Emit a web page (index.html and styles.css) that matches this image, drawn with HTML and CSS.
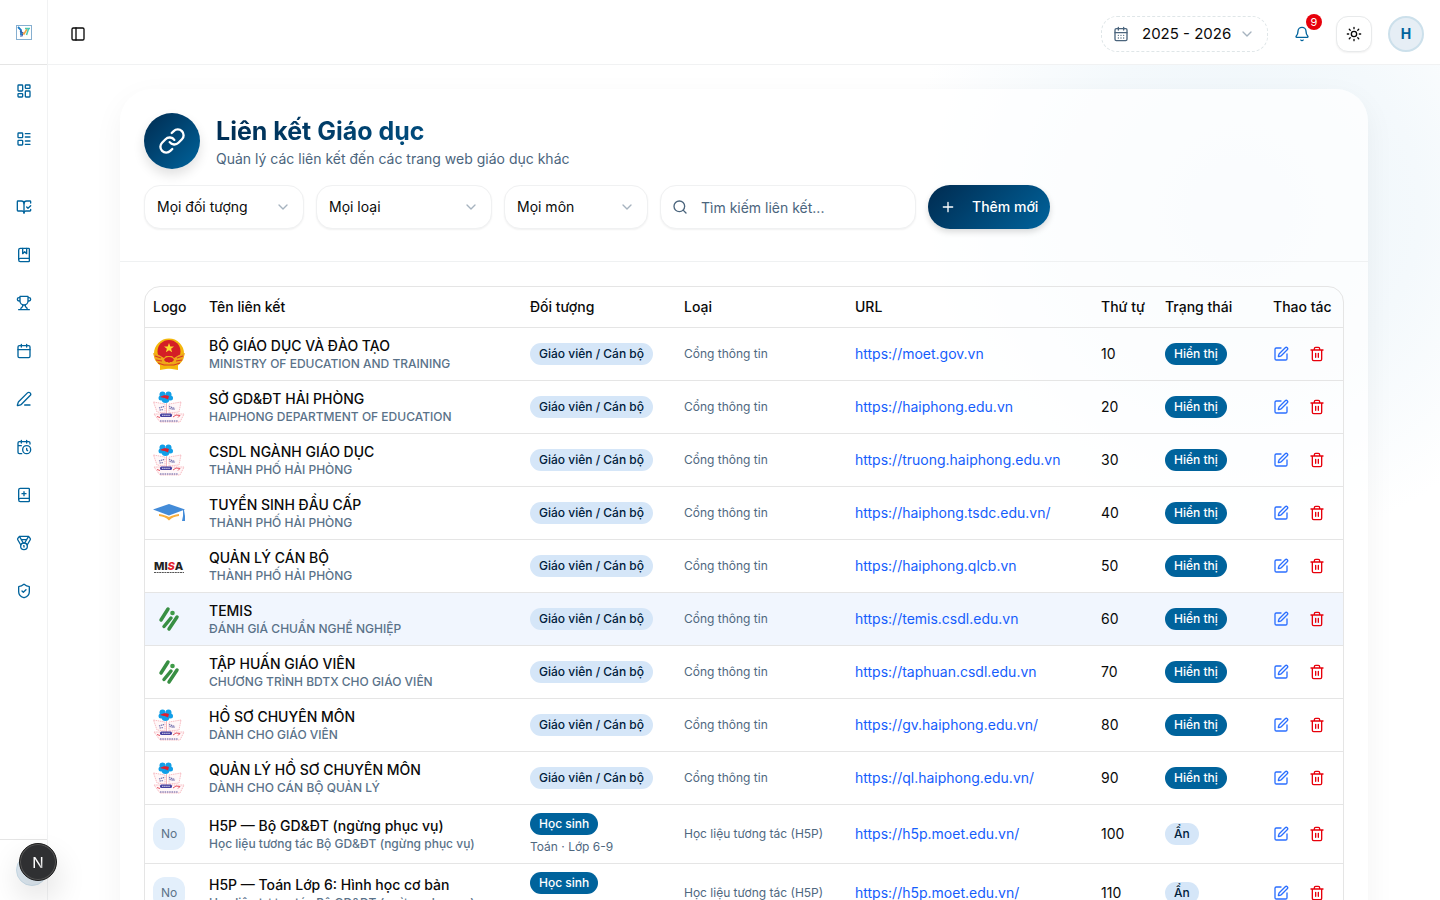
FILE: index.html
```html
<!DOCTYPE html>
<html lang="vi">
<head>
    <meta charset="UTF-8" />
    <meta name="viewport" content="width=device-width, initial-scale=1.0" />
    <title>Liên kết Giáo dục</title>
    <link rel="stylesheet" href="styles.css">
</head>
<body>
    <!-- Icons -->
    <svg class="sprite" aria-hidden="true">
        <symbol id="i-panel" viewBox="0 0 24 24"><rect x="3" y="3" width="18" height="18" rx="2"/><path d="M9 3v18"/></symbol>
        <symbol id="i-dashboard" viewBox="0 0 24 24"><rect x="3" y="3" width="7" height="9" rx="1"/><rect x="14" y="3" width="7" height="5" rx="1"/><rect x="14" y="12" width="7" height="9" rx="1"/><rect x="3" y="16" width="7" height="5" rx="1"/></symbol>
        <symbol id="i-list" viewBox="0 0 24 24"><rect x="3" y="3" width="7" height="7" rx="1"/><rect x="3" y="14" width="7" height="7" rx="1"/><path d="M14 4h7M14 9h7M14 15h7M14 20h7"/></symbol>
        <symbol id="i-book-check" viewBox="0 0 24 24"><path d="M12 21V7M16 12l2 2 4-4"/><path d="M22 6V4a1 1 0 0 0-1-1h-5a4 4 0 0 0-4 4 4 4 0 0 0-4-4H3a1 1 0 0 0-1 1v13a1 1 0 0 0 1 1h6a3 3 0 0 1 3 3 3 3 0 0 1 3-3h6a1 1 0 0 0 1-1v-1.3"/></symbol>
        <symbol id="i-book-mark" viewBox="0 0 24 24"><path d="M10 2v8l3-3 3 3V2"/><path d="M4 19.5v-15A2.5 2.5 0 0 1 6.5 2H19a1 1 0 0 1 1 1v18a1 1 0 0 1-1 1H6.5a1 1 0 0 1 0-5H20"/></symbol>
        <symbol id="i-trophy" viewBox="0 0 24 24"><path d="M6 9H4.500a2.500 2.500 0 0 1 0-5H6M18 9h1.500a2.500 2.500 0 0 0 0-5H18M4 22h16M10 14.660V17c0 .550-.470.980-.970 1.210C7.850 18.750 7 20.240 7 22M14 14.660V17c0 .550.470.980.970 1.210C16.150 18.750 17 20.240 17 22M18 2H6v7a6 6 0 0 0 12 0V2Z"/></symbol>
        <symbol id="i-calendar" viewBox="0 0 24 24"><path d="M8 2v4M16 2v4M3 10h18"/><rect x="3" y="4" width="18" height="18" rx="2"/></symbol>
        <symbol id="i-calendar-days" viewBox="0 0 24 24"><path d="M8 2v4M16 2v4M3 10h18M8 14h.01M12 14h.01M16 14h.01M8 18h.01M12 18h.01M16 18h.01"/><rect x="3" y="4" width="18" height="18" rx="2"/></symbol>
        <symbol id="i-pen" viewBox="0 0 24 24"><path d="M13 21h8"/><path d="M21.174 6.812a1 1 0 0 0-3.986-3.987L3.842 16.174a2 2 0 0 0-.5.830l-1.321 4.352a.5.5 0 0 0 .623.622l4.353-1.320a2 2 0 0 0 .830-.497z"/></symbol>
        <symbol id="i-calendar-clock" viewBox="0 0 24 24"><path d="M21 7.500V6a2 2 0 0 0-2-2H5a2 2 0 0 0-2 2v14a2 2 0 0 0 2 2h3.500M16 2v4M8 2v4M3 10h5M17.500 17.500 16 16.300V14"/><circle cx="16" cy="16" r="6"/></symbol>
        <symbol id="i-book-plus" viewBox="0 0 24 24"><path d="M12 7v6M9 10h6"/><path d="M4 19.5v-15A2.5 2.5 0 0 1 6.5 2H19a1 1 0 0 1 1 1v18a1 1 0 0 1-1 1H6.5a1 1 0 0 1 0-5H20"/></symbol>
        <symbol id="i-medal" viewBox="0 0 24 24"><path d="M7.210 15 2.660 7.140a2 2 0 0 1 .130-2.200L4.400 2.800A2 2 0 0 1 6 2h12a2 2 0 0 1 1.600.800l1.600 2.140a2 2 0 0 1 .140 2.200L16.790 15M11 12 5.120 2.200M13 12l5.880-9.800M8 7h8"/><circle cx="12" cy="17" r="5"/><path d="M12 18v-2h-.5"/></symbol>
        <symbol id="i-shield" viewBox="0 0 24 24"><path d="M20 13c0 5-3.500 7.500-7.660 8.950a1 1 0 0 1-.670-.010C7.500 20.500 4 18 4 13V6a1 1 0 0 1 1-1c2 0 4.500-1.200 6.240-2.720a1.170 1.170 0 0 1 1.520 0C14.510 3.810 17 5 19 5a1 1 0 0 1 1 1z"/><path d="m9 12 2 2 4-4"/></symbol>
        <symbol id="i-chevron" viewBox="0 0 24 24"><path d="m6 9 6 6 6-6"/></symbol>
        <symbol id="i-bell" viewBox="0 0 24 24"><path d="M10.268 21a2 2 0 0 0 3.464 0M3.262 15.326A1 1 0 0 0 4 17h16a1 1 0 0 0 .740-1.673C19.410 13.956 18 12.499 18 8A6 6 0 0 0 6 8c0 4.499-1.411 5.956-2.738 7.326"/></symbol>
        <symbol id="i-sun" viewBox="0 0 24 24"><circle cx="12" cy="12" r="4"/><path d="M12 2v2M12 20v2M4.930 4.930l1.410 1.410M17.660 17.660l1.410 1.410M2 12h2M20 12h2M6.340 17.660l-1.410 1.410M19.070 4.930l-1.410 1.410"/></symbol>
        <symbol id="i-link" viewBox="0 0 24 24"><path d="M10 13a5 5 0 0 0 7.540.540l3-3a5 5 0 0 0-7.070-7.070l-1.720 1.710"/><path d="M14 11a5 5 0 0 0-7.540-.540l-3 3a5 5 0 0 0 7.070 7.070l1.710-1.710"/></symbol>
        <symbol id="i-search" viewBox="0 0 24 24"><circle cx="11" cy="11" r="8"/><path d="m21 21-4.300-4.300"/></symbol>
        <symbol id="i-plus" viewBox="0 0 24 24"><path d="M5 12h14M12 5v14"/></symbol>
        <symbol id="i-edit" viewBox="0 0 24 24"><path d="M12 3H5a2 2 0 0 0-2 2v14a2 2 0 0 0 2 2h14a2 2 0 0 0 2-2v-7"/><path d="M18.375 2.625a1 1 0 0 1 3 3l-9.013 9.014a2 2 0 0 1-.853.505l-2.873.840a.5.5 0 0 1-.620-.620l.840-2.873a2 2 0 0 1 .506-.852z"/></symbol>
        <symbol id="i-trash" viewBox="0 0 24 24"><path d="M3 6h18M19 6v14a2 2 0 0 1-2 2H7a2 2 0 0 1-2-2V6M8 6V4a2 2 0 0 1 2-2h4a2 2 0 0 1 2 2v2M10 11v6M14 11v6"/></symbol>

        <!-- Partner logos -->
        <symbol id="l-moet" viewBox="0 0 32 32">
            <path d="M7 26h18v6l-9-1.500L7 32z" fill="#f5b90f"/>
            <circle cx="16" cy="15.500" r="15" fill="#f3b70d"/>
            <circle cx="16" cy="13.500" r="11.500" fill="#d41f26"/>
            <path d="M16 5l1.300 3.400 3.700.1-2.900 2.300 1 3.500-3.100-2-3.100 2 1-3.500L11 8.500l3.700-.1z" fill="#fbdc2d"/>
            <path d="M0 15l6 2 5 3 2-2h6l2 2 5-3 6-2-2 7-4 4-7 1-3-3-3 3-7-1-4-4z" fill="#eea71a"/>
            <path d="M11 22c1-4 9-4 10 0l-2 2h-6z" fill="#d41f26"/>
            <path d="M2 18l6 2M30 18l-6 2M3 22l6 1M29 22l-6 1M5 25l6 2h10l6-2" fill="none" stroke="#d83b24" stroke-width="1.200"/>
        </symbol>
        <symbol id="l-haiphong" viewBox="0 0 32 32">
            <g fill="#129fe8"><circle cx="9.500" cy="3.500" r="3"/><circle cx="15.500" cy="3.500" r="3"/><circle cx="8" cy="7" r="2.500"/><circle cx="17.500" cy="7" r="2.500"/><circle cx="12.500" cy="8" r="4"/></g>
            <path d="M7 6c3-2 6-2.500 9-1l-1 3.500c-2-1-3-1.500-4-1.500z" fill="#e11f2e"/>
            <g fill="#fff7f8" stroke="#f3a2ab" stroke-width=".7" stroke-dasharray="1.500 .7">
                <path d="M.5 11l11.500 2v9L4 21zM28 11l-12 2v9l10-1zM1 23h30l-4 8H7z"/>
            </g>
            <path d="M13.500 12v11" stroke="#f0a3a9" stroke-width=".8"/>
            <path d="M6 17l5-1.500M16 15.500l6 2M6.500 19l4-.5M16.500 17.500l5 1" stroke="#7370ad" stroke-width="1.200" stroke-dasharray="1.400 .6"/>
            <rect x="7" y="22.500" width="12" height="3.500" rx="1.500" fill="#4540a0"/>
            <path d="M9 24.300h8" stroke="#fff" stroke-width=".8" stroke-dasharray="1.500 .6"/>
            <path d="M20 26l3-2 4 .5-2 2M4 25.500l3 1" fill="none" stroke="#e55362"/>
            <path d="M7 30h18" stroke="#8f88bb" stroke-width="1.300" stroke-dasharray="1.500 .8"/>
        </symbol>
        <symbol id="l-cap" viewBox="0 0 32 32">
            <path d="M6 17c4 .5 7 1.500 10 3 3-1.500 6-2.500 10-3v2c-4 .5-7 1.500-10 4.500-3-3-6-4-10-4.500z" fill="#f9ae3c"/>
            <path d="M0 12.500L16 7l16 5.500L16 18.500z" fill="#438bd8"/>
            <path d="M30 13v6l-1 5h3v-5l-1-6z" fill="#438bd8"/>
        </symbol>
        <symbol id="l-temis" viewBox="0 0 32 32">
            <path d="M15 6L8 17M18 15l-7 8.500M24 14l-8 12" stroke="#388f43" stroke-width="3.500" stroke-linecap="round"/>
            <circle cx="19.500" cy="10" r="2.300" fill="#3f9b48"/>
        </symbol>
    </svg>

    <div class="app">
        <!-- Sidebar -->
        <aside class="sidebar">
            <a class="brand" href="#" aria-label="Trang chủ">
                <svg width="16" height="16" viewBox="0 0 16 16" fill="none">
                    <rect x=".5" y="1.500" width="15" height="14" stroke="#86afd0"/>
                    <path d="M2 3l3 3v5" stroke="#1b79c4" stroke-width="1.800"/>
                    <path d="M4 7l3 2-1 3H4" stroke="#3659a7" stroke-width="1.200"/>
                    <path d="M7 9l1 1 3-5" stroke="#f5a443" stroke-width="1.500"/>
                    <path d="M9 4.500h5M12.500 5l-2 6" stroke="#49c7b4" stroke-width="1.500"/>
                </svg>
            </a>
            <nav class="nav">
                <div class="nav-group">
                    <a href="#" aria-label="Tổng quan"><svg class="icon"><use href="#i-dashboard"/></svg></a>
                    <a href="#" aria-label="Danh mục"><svg class="icon"><use href="#i-list"/></svg></a>
                </div>
                <div class="nav-group">
                    <a href="#" aria-label="Học tập"><svg class="icon"><use href="#i-book-check"/></svg></a>
                    <a href="#" aria-label="Sổ"><svg class="icon"><use href="#i-book-mark"/></svg></a>
                    <a href="#" aria-label="Thi đua"><svg class="icon"><use href="#i-trophy"/></svg></a>
                    <a href="#" aria-label="Lịch"><svg class="icon"><use href="#i-calendar"/></svg></a>
                    <a href="#" aria-label="Soạn bài"><svg class="icon"><use href="#i-pen"/></svg></a>
                    <a href="#" aria-label="Lịch hẹn"><svg class="icon"><use href="#i-calendar-clock"/></svg></a>
                    <a href="#" aria-label="Thêm sách"><svg class="icon"><use href="#i-book-plus"/></svg></a>
                    <a href="#" aria-label="Khen thưởng"><svg class="icon"><use href="#i-medal"/></svg></a>
                    <a href="#" aria-label="Phân quyền"><svg class="icon"><use href="#i-shield"/></svg></a>
                </div>
            </nav>
            <div class="sidebar-footer"><span class="user-dot"></span></div>
        </aside>

        <div class="page">
            <!-- Top bar -->
            <header class="topbar">
                <button class="trigger" aria-label="Thu gọn"><svg class="icon"><use href="#i-panel"/></svg></button>
                <div class="topbar-right">
                    <div class="year field">
                        <svg class="icon field-icon"><use href="#i-calendar-days"/></svg>
                        <select aria-label="Năm học"><option>2025 - 2026</option></select>
                        <svg class="icon chevron"><use href="#i-chevron"/></svg>
                    </div>
                    <button class="bell" aria-label="Thông báo"><svg class="icon"><use href="#i-bell"/></svg><span class="count">9</span></button>
                    <button class="theme" aria-label="Giao diện"><svg class="icon"><use href="#i-sun"/></svg></button>
                    <button class="avatar">H</button>
                </div>
            </header>

            <main class="content">
                <section class="card">
                    <div class="card-header">
                        <div class="heading">
                            <div class="heading-icon"><svg class="icon"><use href="#i-link"/></svg></div>
                            <div>
                                <h1>Liên kết Giáo dục</h1>
                                <p>Quản lý các liên kết đến các trang web giáo dục khác</p>
                            </div>
                        </div>
                        <div class="filters">
                            <div class="field filter-target">
                                <select aria-label="Đối tượng"><option>Mọi đối tượng</option></select>
                                <svg class="icon chevron"><use href="#i-chevron"/></svg>
                            </div>
                            <div class="field filter-type">
                                <select aria-label="Loại"><option>Mọi loại</option></select>
                                <svg class="icon chevron"><use href="#i-chevron"/></svg>
                            </div>
                            <div class="field filter-subject">
                                <select aria-label="Môn"><option>Mọi môn</option></select>
                                <svg class="icon chevron"><use href="#i-chevron"/></svg>
                            </div>
                            <div class="field search">
                                <svg class="icon field-icon"><use href="#i-search"/></svg>
                                <input type="text" aria-label="Tìm kiếm" placeholder="Tìm kiếm liên kết..." />
                            </div>
                            <button class="add-btn"><svg class="icon"><use href="#i-plus"/></svg>Thêm mới</button>
                        </div>
                    </div>

                    <div class="card-body">
                        <div class="table-wrap">
                            <table>
                                <thead>
                                    <tr>
                                        <th class="col-logo">Logo</th>
                                        <th>Tên liên kết</th>
                                        <th class="col-target">Đối tượng</th>
                                        <th class="col-type">Loại</th>
                                        <th class="col-url">URL</th>
                                        <th class="col-order">Thứ tự</th>
                                        <th class="col-status">Trạng thái</th>
                                        <th class="col-actions">Thao tác</th>
                                    </tr>
                                </thead>
                                <tbody id="links"></tbody>
                            </table>
                        </div>
                    </div>
                </section>
            </main>
        </div>
    </div>

    <button class="dev-badge" aria-label="Next.js">
        <svg width="38" height="38" viewBox="0 0 38 38">
            <defs>
                <linearGradient id="n-fade" x1="0" y1="0" x2="1" y2="1">
                    <stop offset=".6" stop-color="#fff"/>
                    <stop offset="1" stop-color="#fff" stop-opacity=".4"/>
                </linearGradient>
            </defs>
            <text x="19" y="25" text-anchor="middle" fill="url(#n-fade)">N</text>
        </svg>
    </button>

    <script>
        const links = [
            { logo: "moet", name: "BỘ GIÁO DỤC VÀ ĐÀO TẠO", desc: "MINISTRY OF EDUCATION AND TRAINING", url: "https://moet.gov.vn" },
            { logo: "haiphong", name: "SỞ GD&ĐT HẢI PHÒNG", desc: "HAIPHONG DEPARTMENT OF EDUCATION", url: "https://haiphong.edu.vn" },
            { logo: "haiphong", name: "CSDL NGÀNH GIÁO DỤC", desc: "THÀNH PHỐ HẢI PHÒNG", url: "https://truong.haiphong.edu.vn" },
            { logo: "cap", name: "TUYỂN SINH ĐẦU CẤP", desc: "THÀNH PHỐ HẢI PHÒNG", url: "https://haiphong.tsdc.edu.vn/" },
            { logo: "misa", name: "QUẢN LÝ CÁN BỘ", desc: "THÀNH PHỐ HẢI PHÒNG", url: "https://haiphong.qlcb.vn" },
            { logo: "temis", name: "TEMIS", desc: "ĐÁNH GIÁ CHUẨN NGHỀ NGHIỆP", url: "https://temis.csdl.edu.vn", active: true },
            { logo: "temis", name: "TẬP HUẤN GIÁO VIÊN", desc: "CHƯƠNG TRÌNH BDTX CHO GIÁO VIÊN", url: "https://taphuan.csdl.edu.vn" },
            { logo: "haiphong", name: "HỒ SƠ CHUYÊN MÔN", desc: "DÀNH CHO GIÁO VIÊN", url: "https://gv.haiphong.edu.vn/" },
            { logo: "haiphong", name: "QUẢN LÝ HỒ SƠ CHUYÊN MÔN", desc: "DÀNH CHO CÁN BỘ QUẢN LÝ", url: "https://ql.haiphong.edu.vn/" },
            { name: "H5P — Bộ GD&ĐT (ngừng phục vụ)", desc: "Học liệu tương tác Bộ GD&ĐT (ngừng phục vụ)", url: "https://h5p.moet.edu.vn/", grades: "Toán · Lớp 6-9" },
            { name: "H5P — Toán Lớp 6: Hình học cơ bản", desc: "Học liệu tương tác Bộ GD&ĐT (ngừng phục vụ)", url: "https://h5p.moet.edu.vn/", grades: "Toán · Lớp 6" }
        ];

        const icon = name => `<svg class="icon"><use href="#i-${name}"/></svg>`;
        const esc = text => text.replace(/&/g, "&amp;");

        function logo(name) {
            if (!name) return `<span class="no-logo">No</span>`;
            if (name === "misa") {
                return `<svg class="logo" viewBox="0 0 32 32">
                    <text x="1" y="20" class="misa-word">MI<tspan class="misa-s">S</tspan>A</text>
                    <path d="M1 22.500h30" stroke="#555" stroke-width="1.200" stroke-dasharray="2 .6"/>
                </svg>`;
            }
            return `<svg class="logo"><use href="#l-${name}"/></svg>`;
        }

        document.getElementById("links").innerHTML = links.map((link, i) => `
            <tr class="${link.active ? "active" : ""}">
                <td>${logo(link.logo)}</td>
                <td><div class="name">${esc(link.name)}</div><div class="desc">${esc(link.desc)}</div></td>
                <td>${link.grades
                    ? `<span class="badge solid">Học sinh</span><div class="grades">${link.grades}</div>`
                    : `<span class="badge">Giáo viên / Cán bộ</span>`}</td>
                <td class="type">${link.grades ? "Học liệu tương tác (H5P)" : "Cổng thông tin"}</td>
                <td><a class="url" href="${link.url}">${link.url}</a></td>
                <td>${(i + 1) * 10}</td>
                <td>${link.grades ? `<span class="badge">Ẩn</span>` : `<span class="badge solid">Hiển thị</span>`}</td>
                <td><div class="actions">
                    <button class="edit" aria-label="Sửa">${icon("edit")}</button>
                    <button class="delete" aria-label="Xóa">${icon("trash")}</button>
                </div></td>
            </tr>`).join("");
    </script>
</body>
</html>
```

FILE: styles.css
```css
* {
    box-sizing: border-box;
}

body {
    margin: 0;
    font-family: Inter, "Noto Sans", sans-serif;
    font-size: 14px;
    line-height: 20px;
    color: #0a0a0a;
    background: #fff;
}

button, select, input {
    font: inherit;
    color: inherit;
}

button {
    padding: 0;
    border: none;
    background: none;
    cursor: pointer;
    display: flex;
    align-items: center;
    justify-content: center;
}

.sprite {
    position: absolute;
    width: 0;
    height: 0;
}

.icon {
    display: block;
    flex: none;
    width: 16px;
    height: 16px;
    fill: none;
    stroke: currentColor;
    stroke-width: 2;
    stroke-linecap: round;
    stroke-linejoin: round;
}

.app {
    display: flex;
    height: 100vh;
}

/* Sidebar */
.sidebar {
    flex: none;
    width: 48px;
    display: flex;
    flex-direction: column;
    border-right: 1px solid #f1f2f3;
}

.brand {
    height: 65px;
    display: flex;
    align-items: center;
    justify-content: center;
    border-bottom: 1px solid #e5e5e5;
}

.nav {
    flex: 1;
    display: flex;
    flex-direction: column;
    gap: 36px;
    padding-top: 10px;
}

.nav-group {
    display: flex;
    flex-direction: column;
    align-items: center;
    gap: 16px;
}

.nav a {
    width: 32px;
    height: 32px;
    display: flex;
    align-items: center;
    justify-content: center;
    color: #00639c;
}

.sidebar-footer {
    height: 61px;
    padding: 14px 0 0 16px;
    border-top: 1px solid #e5e5e5;
}

.user-dot {
    display: block;
    width: 32px;
    height: 32px;
    border: 1px solid #cbdeea;
    border-radius: 50%;
    background: #dfeaf3;
}

/* Top bar */
.page {
    flex: 1;
    min-width: 0;
    display: flex;
    flex-direction: column;
}

.topbar {
    flex: none;
    height: 65px;
    display: flex;
    align-items: flex-start;
    justify-content: space-between;
    padding: 16px 16px 0;
    border-bottom: 1px solid #f1f2f3;
}

.trigger {
    width: 28px;
    height: 36px;
}

.topbar-right {
    display: flex;
    gap: 16px;
}

.field {
    position: relative;
    height: 44px;
}

.field select, .field input {
    width: 100%;
    height: 100%;
    padding: 0 12px;
    border: 1px solid #f0f1f2;
    border-radius: 16px;
    background: #fff;
    box-shadow: 0 1px 2px rgba(0, 0, 0, 0.06);
    appearance: none;
    outline: none;
}

.field .icon {
    position: absolute;
    top: 50%;
    transform: translateY(-50%);
    pointer-events: none;
}

.field-icon {
    left: 12px;
    color: #4b657d;
}

.chevron {
    right: 13px;
    color: #a6b3bf;
}

.year {
    width: 167px;
    height: 36px;
}

.year select {
    padding: 0 36px 0 40px;
    border: 1px dashed #dfe6e8;
    font-size: 15px;
    box-shadow: none;
}

.bell {
    position: relative;
    width: 36px;
    height: 36px;
    color: #00639c;
}

.count {
    position: absolute;
    top: -2px;
    right: -2px;
    width: 16px;
    height: 16px;
    border-radius: 50%;
    background: #e7000b;
    color: #fff;
    font-size: 11px;
    line-height: 16px;
}

.theme {
    width: 36px;
    height: 36px;
    border: 1px solid #e8eaeb;
    border-radius: 12px;
    background: #fff;
    box-shadow: 0 1px 2px rgba(0, 0, 0, 0.06);
}

.avatar {
    width: 36px;
    height: 36px;
    border: 2px solid #cce0eb;
    border-radius: 50%;
    background: #e6eef5;
    color: #00639c;
    font-weight: 700;
}

/* Card */
.content {
    flex: 1;
    min-height: 0;
    overflow-y: auto;
    scrollbar-width: none;
    padding: 24px 72px;
    background: radial-gradient(circle at calc(100% - 200px) 144px, #edf5fa 0, #f4f9fc 180px, #fff 340px);
}

.card {
    border-radius: 32px;
    background: rgba(255, 255, 255, 0.7);
    box-shadow: 0 10px 30px rgba(0, 0, 0, 0.05);
}

.card-header {
    padding: 24px 24px 32px;
    border-bottom: 1px solid #eff1f2;
}

.heading {
    display: flex;
    align-items: center;
    gap: 16px;
    margin-bottom: 16px;
}

.heading-icon {
    width: 56px;
    height: 56px;
    display: flex;
    align-items: center;
    justify-content: center;
    border-radius: 50%;
    background: linear-gradient(135deg, #002b50, #00639c);
    color: #fff;
    box-shadow: 0 6px 12px rgba(0, 0, 0, 0.12);
}

.heading-icon .icon {
    width: 28px;
    height: 28px;
}

h1 {
    margin: 0;
    font-size: 25px;
    line-height: 36px;
    font-weight: 700;
    color: transparent;
    background: linear-gradient(135deg, #002b50, #00639c);
    background-clip: text;
}

.heading p {
    margin: 0;
    line-height: 20px;
    color: #4b657d;
}

.filters {
    display: flex;
    flex-wrap: wrap;
    gap: 12px;
}

.filter-target {
    width: 160px;
}

.filter-type {
    width: 176px;
}

.filter-subject {
    width: 144px;
}

.search {
    width: 256px;
}

.search input {
    padding-left: 40px;
}

.search input::placeholder {
    color: #4b657d;
    opacity: 1;
}

.add-btn {
    height: 44px;
    gap: 16px;
    padding: 0 12px;
    border-radius: 22px;
    background: linear-gradient(135deg, #002b50, #00639c);
    color: #fff;
    font-weight: 500;
    box-shadow: 0 3px 6px rgba(0, 0, 0, 0.15);
}

.card-body {
    padding: 24px;
}

/* Table */
.table-wrap {
    border: 1px solid #e5e5e5;
    border-radius: 16px;
    overflow: hidden;
}

table {
    width: 100%;
    table-layout: fixed;
    border-collapse: separate;
    border-spacing: 0;
}

th {
    height: 41px;
    padding: 0 8px;
    border-bottom: 1px solid #e5e5e5;
    font-weight: 500;
    text-align: left;
    white-space: nowrap;
}

td {
    padding: 8px;
    border-bottom: 1px solid #e5e5e5;
    white-space: nowrap;
}

.col-logo {
    width: 56px;
}

.col-target {
    width: 154px;
}

.col-type {
    width: 171px;
}

.col-url {
    width: 246px;
}

.col-order {
    width: 64px;
}

.col-status {
    width: 108px;
}

.col-actions {
    width: 78px;
}

tr.active {
    background: #f1f6fe;
}

.logo {
    display: block;
    width: 32px;
    height: 32px;
}

.misa-word {
    font-size: 11px;
    font-weight: 800;
    fill: #222;
}

.misa-s {
    font-style: italic;
    fill: #e5212b;
}

.no-logo {
    display: block;
    width: 32px;
    height: 32px;
    border-radius: 12px;
    background: #e3effb;
    color: #5c7389;
    font-size: 12px;
    line-height: 32px;
    text-align: center;
}

.name {
    font-weight: 500;
}

.desc {
    font-size: 12px;
    line-height: 16px;
    font-weight: 500;
    color: #5a7289;
}

.type, .grades {
    font-size: 12px;
    line-height: 16px;
    color: #4f687f;
}

.grades {
    margin-top: 4px;
}

.badge {
    display: block;
    width: fit-content;
    padding: 3px 9px;
    border-radius: 11px;
    background: #d5e6f8;
    color: #00203c;
    font-size: 12px;
    line-height: 16px;
    font-weight: 500;
}

.badge.solid {
    background: #00639c;
    color: #fff;
}

.url {
    color: #155dfc;
    text-decoration: none;
}

.actions {
    display: flex;
    gap: 20px;
}

.edit {
    color: #2b6fff;
}

.delete {
    color: #e7000b;
}

/* Floating badge */
.dev-badge {
    position: fixed;
    left: 19px;
    bottom: 19px;
    width: 38px;
    height: 38px;
    border: 1px solid #1c1c1c;
    border-radius: 50%;
    background: #2f3032;
    box-shadow: inset 0 0 0 1px #555, 0 16px 32px rgba(0, 0, 0, 0.14);
}

.dev-badge text {
    font-size: 16px;
}
```
